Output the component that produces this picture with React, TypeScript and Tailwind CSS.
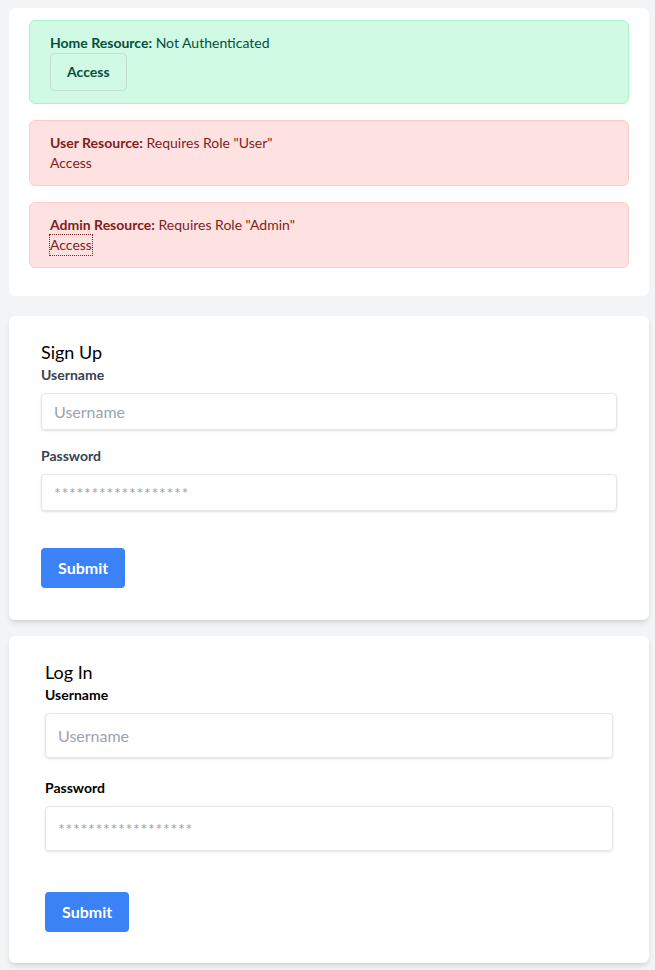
import React from 'react';

const font = { fontFamily: 'Lato, "Noto Sans", sans-serif' };

const Resource = ({
  name,
  status,
  allowed,
  focused,
}: {
  name: string;
  status: string;
  allowed?: boolean;
  focused?: boolean;
}) => {
  if (allowed) {
    return (
      <div className="mb-4 rounded-md border border-[#a7f3d0] bg-[#d1fae5] px-5 py-3 text-sm leading-5 text-[#064e3b]">
        <p>
          <span className="font-bold">{name}:</span> {status}
        </p>
        <button className="block rounded border border-[#c6ddd2] px-4 py-2 font-bold leading-5">
          Access
        </button>
      </div>
    );
  }
  return (
    <div className="mb-4 rounded-md border border-[#fecaca] bg-[#fee2e2] px-5 py-3 text-sm leading-5 text-[#7f1d1d]">
      <p>
        <span className="font-bold">{name}:</span> {status}
      </p>
      <button
        className={
          focused
            ? 'block leading-5 outline-1 outline-dotted outline-[#7f1d1d]'
            : 'block leading-5'
        }
      >
        Access
      </button>
    </div>
  );
};

const AuthForm = ({
  title,
  dark,
  wide,
}: {
  title: string;
  dark?: boolean;
  wide?: boolean;
}) => {
  const labelCls = dark
    ? 'mb-2 block text-sm font-bold leading-5 text-black'
    : 'mb-2 block text-sm font-bold leading-5 text-[#374151]';
  const inputCls = wide
    ? 'block h-[45px] w-full rounded border border-[#e5e7eb] px-3 text-base text-gray-700 shadow-sm placeholder:text-[#9ca3af]'
    : 'block h-[37px] w-full rounded border border-[#e5e7eb] px-3 text-base text-gray-700 shadow-sm placeholder:text-[#9ca3af]';

  return (
    <form
      className={
        wide
          ? 'rounded-md bg-white px-9 pt-6 pb-[31px] shadow-md'
          : 'mb-4 rounded-md bg-white px-8 pt-6 pb-8 shadow-md'
      }
      onSubmit={(e) => e.preventDefault()}
    >
      <h2 className="text-lg leading-[25px] text-black">{title}</h2>
      <div className={wide ? 'mb-5' : 'mb-4'}>
        <label className={labelCls}>Username</label>
        <input className={inputCls} type="text" placeholder="Username" />
      </div>
      <div className={wide ? 'mb-[41px]' : 'mb-[37px]'}>
        <label className={labelCls}>Password</label>
        <input
          className={inputCls + ' tracking-[0.7px]'}
          type="password"
          placeholder="******************"
        />
      </div>
      <button
        type="submit"
        className="rounded bg-[#3b82f6] px-[17px] py-2 text-base font-bold leading-6 text-white"
      >
        Submit
      </button>
    </form>
  );
};

export default function App() {
  return (
    <div className="min-h-screen bg-[#f3f4f6] pt-2" style={font}>
      <div className="ml-[9px] w-[640px]">
        {/* Resources */}
        <div className="mb-5 rounded-md bg-white px-5 pt-3 pb-3">
          <Resource name="Home Resource" status="Not Authenticated" allowed />
          <Resource name="User Resource" status={'Requires Role "User"'} />
          <Resource name="Admin Resource" status={'Requires Role "Admin"'} focused />
        </div>

        <AuthForm title="Sign Up" />
        <AuthForm title="Log In" dark wide />
      </div>
    </div>
  );
}
